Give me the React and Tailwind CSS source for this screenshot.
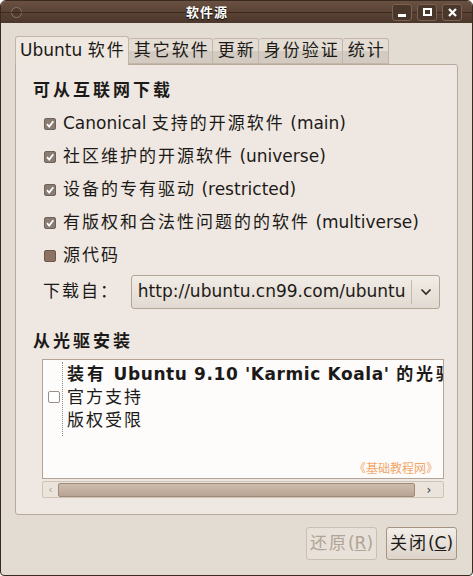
import React from 'react';

const FONT = { fontFamily: '"DejaVu Sans", "Noto Sans CJK SC", sans-serif' };

// CJK glyphs in the reference sit on a wider advance than the fallback font gives
const T = ({ children, bold }) => {
  const parts = String(children).split(/([\u3000-\u9fff\uff00-\uffef]+)/);
  return (
    <span>
      {parts.map((p, i) =>
        /[\u3000-\u9fff\uff00-\uffef]/.test(p) ? (
          <span key={i} className={bold ? 'tracking-[3px]' : 'tracking-[2px]'}>{p}</span>
        ) : (
          <span key={i}>{p}</span>
        )
      )}
    </span>
  );
};

const Check = ({ state }) => {
  if (state === 'off') {
    return <span className="w-[12px] h-[12px] rounded-[2px] bg-[#8c7263] border border-[#6e5648] shrink-0" />;
  }
  return (
    <span className="w-[12px] h-[12px] rounded-[2px] bg-[#8a7c72] border border-[#6f6258] shrink-0 flex items-center justify-center">
      <svg width="10" height="10" viewBox="0 0 10 10">
        <path d="M2 5.2 L4.2 7.5 L8.3 2.2" fill="none" stroke="#fff" strokeWidth="1.8" />
      </svg>
    </span>
  );
};

const TitleBtn = ({ children }) => (
  <div className="w-[20px] h-[17px] rounded-[3px] border border-[#7a6354] bg-[#4a372b] flex items-center justify-center">
    {children}
  </div>
);

const App = () => {
  const sources = [
    ['on', 'Canonical 支持的开源软件 (main)'],
    ['on', '社区维护的开源软件 (universe)'],
    ['on', '设备的专有驱动 (restricted)'],
    ['on', '有版权和合法性问题的的软件 (multiverse)'],
    ['off', '源代码'],
  ];
  const tabs = ['其它软件', '更新', '身份验证', '统计'];

  return (
    <div className="w-[473px] h-[576px] bg-[#e3dcd3] text-[#1c1a18] flex flex-col overflow-hidden rounded-t-[6px] rounded-b-[4px] border border-[#3a2a20]" style={FONT}>
      {/* title bar */}
      <div className="h-[22px] shrink-0 bg-gradient-to-b from-[#6a5142] via-[#5a4335] to-[#4b372b] flex items-center px-[6px] relative">
        <div className="w-[11px] h-[11px] rounded-full border border-[#8d7767] bg-[#4e3a2e] ml-[4px]" />
        <div className="absolute inset-x-0 top-[11px] h-px bg-[#3b2a20]" />
        <div className="flex-1 text-center text-white font-bold text-[13px] leading-none relative tracking-[1px]" style={{ textShadow: '0 1px 1px #000' }}>软件源</div>
        <div className="flex gap-[5px] mr-[4px] relative">
          <TitleBtn><span className="block w-[8px] h-[3px] bg-white mt-[6px]" /></TitleBtn>
          <TitleBtn><span className="block w-[9px] h-[8px] border-2 border-white" /></TitleBtn>
          <TitleBtn>
            <svg width="9" height="9" viewBox="0 0 9 9"><path d="M1 1 L8 8 M8 1 L1 8" stroke="#fff" strokeWidth="2.2" /></svg>
          </TitleBtn>
        </div>
      </div>

      <div className="flex-1 flex flex-col px-[14px] pt-[13px]">
        {/* tabs */}
        <div className="flex items-end h-[28px] relative z-10">
          <div className="h-[29px] -mb-px pl-[4px] pr-[2px] bg-[#efe8e1] border border-[#c3b6a8] border-b-0 rounded-t-[3px] flex items-center text-[17px] whitespace-nowrap">
            <T>Ubuntu 软件</T>
          </div>
          {tabs.map((t) => (
            <div key={t} className="h-[26px] pl-[5px] pr-[2px] border border-[#c3b6a8] border-l-0 rounded-t-[3px] bg-gradient-to-b from-[#e4ddd4] from-50% to-[#d3cbc1] to-50% flex items-center text-[17px] whitespace-nowrap">
              <T>{t}</T>
            </div>
          ))}
        </div>

        {/* panel */}
        <div className="w-[443px] h-[451px] bg-[#efe8e2] border border-[#b7a99b] rounded-[3px] rounded-tl-none flex flex-col px-[17px]">
          <div className="h-[33px] mt-[9px] flex items-center font-bold text-[17px]"><T bold>可从互联网下载</T></div>
          {sources.map(([s, label]) => (
            <div key={label} className="h-[33px] flex items-center gap-[7px] pl-[11px] text-[17px] whitespace-nowrap">
              <Check state={s} />
              <T>{label}</T>
            </div>
          ))}

          <div className="h-[34px] mt-[3px] flex items-center">
            <span className="w-[98px] pl-[10px] text-[17px]"><T>下载自：</T></span>
            <div className="w-[310px] h-[34px] rounded-[3px] border border-[#b1a597] bg-gradient-to-b from-[#f1ece6] to-[#e2dad1] flex items-center">
              <span className="flex-1 pl-[6px] text-[17px] whitespace-nowrap overflow-hidden">http://ubuntu.cn99.com/ubuntu</span>
              <span className="w-px h-[24px] bg-[#c4b9ad]" />
              <span className="w-[27px] flex items-center justify-center">
                <svg width="12" height="8" viewBox="0 0 12 8"><path d="M1.5 1.5 L6 6 L10.5 1.5" fill="none" stroke="#2c2622" strokeWidth="1.6" /></svg>
              </span>
            </div>
          </div>

          <div className="h-[33px] mt-[16px] flex items-center font-bold text-[17px]"><T bold>从光驱安装</T></div>

          <div className="ml-[9px] w-[402px] h-[120px] mt-[1px] bg-[#fdfcfb] border border-[#b3a396] relative flex overflow-hidden">
            <div className="w-[17px] shrink-0 flex items-start justify-end pt-[31px]">
              <span className="w-[12px] h-[12px] border border-[#9b8e84] rounded-[2px] bg-white" />
            </div>
            <div className="w-px shrink-0 h-[74px] mt-[2px] ml-[2px] border-l border-dotted border-[#8a8a8a]" />
            <div className="pl-[4px] pt-[3px] text-[17px] leading-[23px] whitespace-nowrap">
              <div className="font-bold tracking-[0.6px]"><T bold>装有 Ubuntu 9.10 'Karmic Koala' 的光驱</T></div>
              <div><T>官方支持</T></div>
              <div><T>版权受限</T></div>
            </div>
            <div className="absolute right-[5px] bottom-[3px] text-[12px] text-[#f3a669] leading-none whitespace-nowrap">《基础教程网》</div>
          </div>

          <div className="ml-[9px] w-[402px] h-[17px] mt-[2px] border border-[#cfc3b6] rounded-[2px] bg-[#ebe4dc] flex items-center">
            <span className="w-[15px] text-center text-[11px] text-[#a8a098] leading-none">‹</span>
            <div className="w-[357px] h-[14px] rounded-[2px] border border-[#9e8876] bg-gradient-to-b from-[#cdbdae] to-[#b9a493]" />
            <span className="flex-1 text-center text-[12px] text-[#333] leading-none">›</span>
          </div>
        </div>

        {/* buttons */}
        <div className="flex justify-end gap-[9px] mt-[12px] pr-[1px]">
          <div className="w-[71px] h-[33px] rounded-[3px] border border-[#cbbfb2] bg-[#e8e1d9] flex items-center justify-center text-[17px] text-[#afa497]">
            <span><T>还原</T>(<span className="underline">R</span>)</span>
          </div>
          <div className="w-[71px] h-[33px] rounded-[3px] border border-[#a59584] bg-gradient-to-b from-[#f3eee9] to-[#dcd3c9] flex items-center justify-center text-[17px]">
            <span><T>关闭</T>(<span className="underline">C</span>)</span>
          </div>
        </div>
      </div>
    </div>
  );
};

export default App;
